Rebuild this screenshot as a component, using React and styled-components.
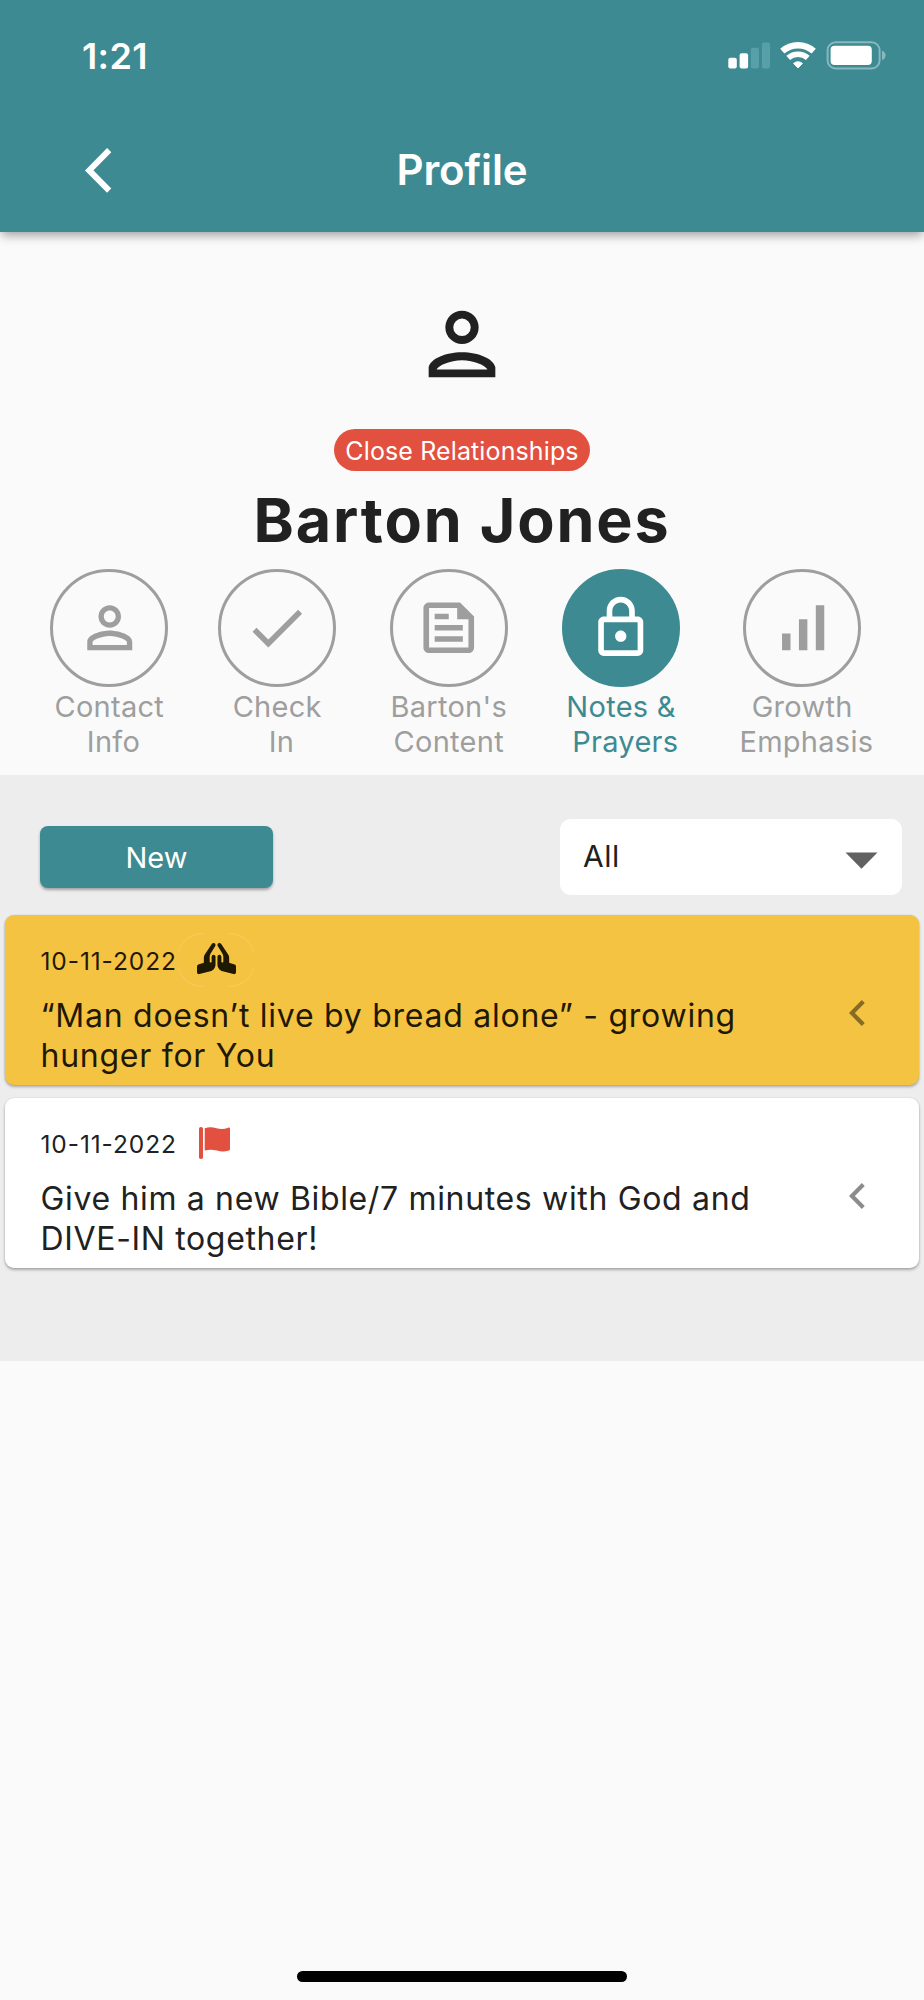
import React from 'react'
import styled, { createGlobalStyle } from 'styled-components'
import { FaPrayingHands } from 'react-icons/fa'

const GlobalStyle = createGlobalStyle`
    :root{
        --teal: #3d8a93;
        --red: #e2513f;
        --yellow: #f5c342;
        --gray: #9e9e9e;
        --dark: #212121;
    }
    *{
        box-sizing: border-box;
    }
    body{
        margin: 0;
        background: #fafafa;
        font-family: Inter, "Liberation Sans", sans-serif;
        color: var(--dark);
    }
    svg{
        display: block;
        flex-shrink: 0;
    }
`;
const Screen = styled.div`
    width: 924px;
    height: 2000px;
    display: flex;
    flex-direction: column;
`;

/* header */
const Header = styled.header`
    height: 232px;
    background: var(--teal);
    color: #fff;
    box-shadow: 0 5px 9px -2px rgba(0,0,0,0.28), 0 3px 14px -1px rgba(0,0,0,0.14);
`;
const StatusBar = styled.div`
    height: 111px;
    padding: 0 38px 0 82px;
    display: flex;
    align-items: center;
    justify-content: space-between;
`;
const Time = styled.span`
    font-size: 36px;
    line-height: 36px;
    font-weight: 600;
    letter-spacing: 0.4px;
`;
const StatusIcons = styled.div`
    display: flex;
    align-items: center;
    gap: 10px;
`;
const NavBar = styled.div`
    height: 118px;
    padding: 0 85px;
    display: grid;
    grid-template-columns: 1fr auto 1fr;
    align-items: center;
`;
const Title = styled.h1`
    margin: 0;
    font-size: 42px;
    line-height: 50px;
    font-weight: 600;
    letter-spacing: -0.1px;
`;

/* person */
const Person = styled.section`
    height: 543px;
    padding-top: 62px;
    display: flex;
    flex-direction: column;
    align-items: center;
`;
const Group = styled.span`
    margin-top: 35px;
    width: 256px;
    height: 42px;
    padding-top: 2px;
    border-radius: 21px;
    background: var(--red);
    color: #fff;
    font-size: 25px;
    line-height: 41px;
    letter-spacing: 0.12px;
    text-align: center;
    white-space: nowrap;
`;
const Name = styled.h2`
    margin: 13px 0 12px;
    font-size: 61px;
    line-height: 73px;
    font-weight: 700;
    letter-spacing: 1.85px;
    white-space: nowrap;
`;
const Tabs = styled.nav`
    width: 100%;
    padding-left: 25px;
    display: grid;
    grid-template-columns: 168.6px 167.2px 176px 168.6px 193.6px;
`;
const Tab = styled.div`
    display: flex;
    flex-direction: column;
    align-items: center;
    color: ${({ $active }) => $active ? 'var(--teal)' : 'var(--gray)'};
`;
const Circle = styled.div`
    width: 118px;
    height: 118px;
    border: 3px solid ${({ $active }) => $active ? 'var(--teal)' : 'var(--gray)'};
    border-radius: 50%;
    background: ${({ $active }) => $active ? 'var(--teal)' : 'transparent'};
    color: ${({ $active }) => $active ? '#fff' : 'var(--gray)'};
    display: flex;
    align-items: center;
    justify-content: center;
`;
const TabLabel = styled.span`
    margin-top: 1.6px;
    font-size: 29px;
    line-height: 35.7px;
    letter-spacing: 0.28px;
    text-align: center;
    white-space: pre;
`;

/* notes */
const Notes = styled.section`
    height: 586px;
    padding: 44px 5px 0;
    background: #ededed;
    display: flex;
    flex-direction: column;
`;
const Toolbar = styled.div`
    height: 76px;
    margin-bottom: 20px;
    padding: 0 17px 0 35px;
    display: flex;
    align-items: center;
    justify-content: space-between;
`;
const NewButton = styled.button`
    width: 233px;
    height: 62px;
    padding: 1px 0 0;
    border: none;
    border-radius: 8px;
    background: var(--teal);
    box-shadow: 0 2px 3px rgba(0,0,0,0.32);
    color: #fff;
    font-family: inherit;
    font-size: 29px;
    font-weight: 400;
`;
const Select = styled.div`
    width: 342px;
    height: 76px;
    padding: 0 24px 0 23px;
    border-radius: 11px;
    background: #fff;
    display: flex;
    align-items: center;
    justify-content: space-between;
    font-size: 30px;
    line-height: 36px;
    letter-spacing: 0.5px;
    svg{
        margin-top: 7px;
    }
    span{
        margin-top: -2px;
    }
`;
const Card = styled.article`
    height: 170px;
    margin-bottom: 13px;
    padding: 18px 54.5px 0 35.5px;
    border-radius: 9px;
    background: ${({ $prayer }) => $prayer ? 'var(--yellow)' : '#fff'};
    box-shadow: 0 2px 3px rgba(0,0,0,0.28), 0 0 2px rgba(0,0,0,0.12);
    display: flex;
`;
const CardBody = styled.div`
    flex: 1;
    padding-right: 60px;
`;
const CardTop = styled.div`
    height: 54px;
    margin-bottom: 9px;
    display: flex;
    align-items: center;
`;
const DateText = styled.time`
    width: 137.5px;
    padding-top: 2px;
    font-size: 24.5px;
    line-height: 30px;
    letter-spacing: 0.9px;
    white-space: nowrap;
    color: ${({ $prayer }) => $prayer ? '#1f1903' : 'var(--dark)'};
`;
const Marker = styled.div`
    width: 76px;
    height: 54px;
    display: grid;
    place-items: center;
    > *{
        grid-area: 1 / 1;
    }
`;
const Hands = styled(FaPrayingHands)`
    width: 39px;
    height: 31.2px;
    margin-top: -2px;
    color: #1f1903;
`;
const NoteText = styled.p`
    margin: 0;
    font-size: 32px;
    line-height: 40px;
    letter-spacing: ${({ $prayer }) => $prayer ? '0.74px' : '0.66px'};
    color: ${({ $prayer }) => $prayer ? '#1f1903' : 'var(--dark)'};
`;
const Arrow = styled.svg`
    width: 16px;
    height: 26px;
    margin-top: 67px;
    color: rgba(0,0,0,0.45);
`;
const HomeBar = styled.div`
    width: 330px;
    height: 11px;
    margin: auto auto 18px;
    border-radius: 6px;
    background: #000;
`;

const icons = {
    contact: 'M12 5.9c1.16 0 2.1.94 2.1 2.1s-.94 2.1-2.1 2.1S9.9 9.16 9.9 8s.94-2.1 2.1-2.1m0 9c2.97 0 6.1 1.46 6.1 2.1v1.1H5.9V17c0-.64 3.13-2.1 6.1-2.1M12 4C9.79 4 8 5.79 8 8s1.79 4 4 4 4-1.79 4-4-1.79-4-4-4zm0 9c-2.67 0-8 1.34-8 4v3h16v-3c0-2.66-5.33-4-8-4z',
    check: 'M9 16.2L4.8 12l-1.4 1.4L9 19 21 7l-1.4-1.4L9 16.2z',
    content: 'M16 3H5c-1.1 0-2 .9-2 2v14c0 1.1.9 2 2 2h14c1.1 0 2-.9 2-2V8l-5-5zm3 16H5V5h10v4h4v10zM7 17h10v-2H7v2zm5-10H7v2h5V7zm-5 6h10v-2H7v2z',
    lock: 'M18 8h-1V6c0-2.76-2.24-5-5-5S7 3.24 7 6v2H6c-1.1 0-2 .9-2 2v10c0 1.1.9 2 2 2h12c1.1 0 2-.9 2-2V10c0-1.1-.9-2-2-2zM9 6c0-1.66 1.34-3 3-3s3 1.34 3 3v2H9V6zm9 14H6V10h12v10zm-6-3c1.1 0 2-.9 2-2s-.9-2-2-2-2 .9-2 2 .9 2 2 2z',
    growth: 'M17 4h3v16h-3V4zM5 14h3v6H5v-6zm6-5h3v11h-3V9z',
}

const tabs = [
    { icon: 'contact', label: 'Contact\n Info' },
    { icon: 'check', label: 'Check\n In' },
    { icon: 'content', label: "Barton's\nContent" },
    { icon: 'lock', label: 'Notes &\n Prayers', active: true },
    { icon: 'growth', label: 'Growth\n Emphasis' },
]

const notes = [
    { date: '10-11-2022', text: '“Man doesn’t live by bread alone” - growing hunger for You', prayer: true },
    { date: '10-11-2022', text: 'Give him a new Bible/7 minutes with God and DIVE-IN together!', prayer: false },
]

function Signal() {
    return (
        <svg width="42" height="27" viewBox="0 0 42 27" fill="#fff">
            <rect x="0.3" y="15.8" width="8.5" height="10.7" rx="2" />
            <rect x="11.6" y="11.2" width="8.5" height="15.3" rx="2" />
            <rect x="22.8" y="5.8" width="8.2" height="20.7" rx="2" fill="#589fa8" />
            <rect x="33.9" y="0.5" width="8.1" height="26" rx="2" fill="#589fa8" />
        </svg>
    )
}

function Wifi() {
    return (
        <svg width="36" height="27" viewBox="0 0 36 27" fill="none" stroke="#fff">
            <path d="M2.3 9.2A23.7 23.7 0 0 1 33.7 9.2" strokeWidth="6.4" />
            <path d="M8.2 15.9A14.8 14.8 0 0 1 27.8 15.9" strokeWidth="5.6" />
            <path d="M18 26L13.6 21.4A6.8 6.8 0 0 1 22.4 21.4Z" fill="#fff" strokeWidth="1" strokeLinejoin="round" />
        </svg>
    )
}

function Battery() {
    return (
        <svg width="60" height="29" viewBox="0 0 60 29">
            <rect x="1.6" y="1.3" width="52" height="26.2" rx="8" fill="none" stroke="#86b8be" strokeWidth="2" />
            <rect x="4.6" y="4.7" width="41.2" height="19.4" rx="4" fill="#fff" />
            <path d="M56 9.6c2.2 1 3.6 2.8 3.6 4.8s-1.4 3.8-3.6 4.8z" fill="#86b8be" />
        </svg>
    )
}

function TabIcon({ name }) {
    return (
        <svg width="67.5" height="67.5" viewBox="0 0 24 24" fill="currentColor">
            <path d={icons[name]} />
        </svg>
    )
}

function Note({ date, text, prayer }) {
    return (
        <Card $prayer={prayer}>
            <CardBody>
                <CardTop>
                    <DateText $prayer={prayer}>{date}</DateText>
                    <Marker>
                        {prayer ? (
                            <>
                                <svg width="76" height="54" viewBox="0 0 76 54" fill="none" stroke="rgba(255,255,255,0.17)">
                                    <path d="M25 0.5A26.5 26.5 0 0 0 25 53.5M51 0.5A26.5 26.5 0 0 1 51 53.5" />
                                </svg>
                                <Hands />
                            </>
                        ) : (
                            <svg width="35" height="32" viewBox="0 0 35 32" fill="#e2513f">
                                <rect x="0" y="0" width="4" height="32" rx="1.8" />
                                <path d="M5.7 1.3C10-.3 13.5 0 17.5 1.3c4 1.2 8 1 11.6-.5 1.1-.5 1.900-.2 1.900.8v20.4c0 .8-.4 1.200-1.100 1.500-3.800 1.400-8 1.300-12 .1-4-1.200-7.800-1.300-12.200-.1z" />
                            </svg>
                        )}
                    </Marker>
                </CardTop>
                <NoteText $prayer={prayer}>{text}</NoteText>
            </CardBody>
            <Arrow viewBox="0 0 16 26" fill="none" stroke="currentColor" strokeWidth="4.2">
                <path d="M14.3 1.5L2.9 13l11.4 11.5" />
            </Arrow>
        </Card>
    )
}

function App() {
    return (
        <>
            <GlobalStyle />
            <Screen>
                <Header>
                    <StatusBar>
                        <Time>1:21</Time>
                        <StatusIcons>
                            <Signal />
                            <Wifi />
                            <Battery />
                        </StatusIcons>
                    </StatusBar>
                    <NavBar>
                        <svg width="27" height="45" viewBox="0 0 27 45" fill="none" stroke="#fff" strokeWidth="6">
                            <path d="M24.2 2.2L4.2 22.4l20 20.2" />
                        </svg>
                        <Title>Profile</Title>
                    </NavBar>
                </Header>

                <Person>
                    <svg width="100" height="100" viewBox="0 0 24 24" fill="#212121">
                        <path d="M12 5.9a2.1 2.1 0 1 1 0 4.2 2.1 2.1 0 0 1 0-4.2M12 4a4 4 0 1 0 0 8 4 4 0 0 0 0-8z" fillRule="evenodd" />
                        <path fillRule="evenodd" d="M4 20v-2.4C4.4 15.6 8 14 12 14s7.6 1.6 8 3.6V20zM5.9 18.1h12.2c-.4-.9-3.200-2.200-6.100-2.200s-5.700 1.300-6.100 2.200z" />
                    </svg>
                    <Group>Close Relationships</Group>
                    <Name>Barton Jones</Name>
                    <Tabs>
                        {tabs.map(({ icon, label, active }) => (
                            <Tab key={icon} $active={active}>
                                <Circle $active={active}>
                                    <TabIcon name={icon} />
                                </Circle>
                                <TabLabel>{label}</TabLabel>
                            </Tab>
                        ))}
                    </Tabs>
                </Person>

                <Notes>
                    <Toolbar>
                        <NewButton>New</NewButton>
                        <Select>
                            <span>All</span>
                            <svg width="33" height="17" viewBox="0 0 33 17" fill="#616161">
                                <path d="M0.5 0.5h32L16.5 16.7z" />
                            </svg>
                        </Select>
                    </Toolbar>
                    {notes.map((note) => (
                        <Note key={note.text} {...note} />
                    ))}
                </Notes>

                <HomeBar />
            </Screen>
        </>
    )
}

export default App
